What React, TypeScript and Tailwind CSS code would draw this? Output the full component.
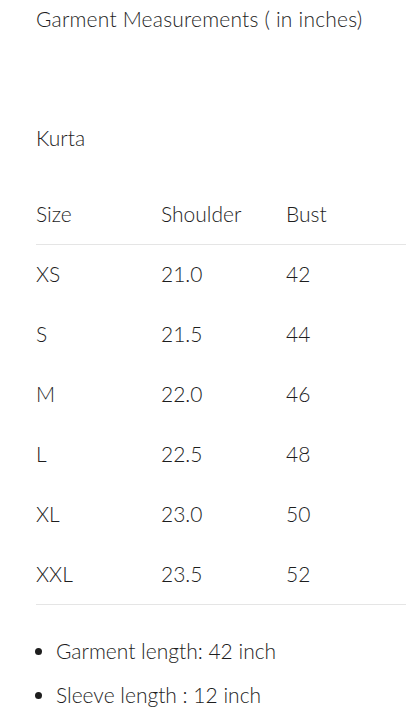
export default function App() {
  const rows = [
    ["XS", "21.0", "42"],
    ["S", "21.5", "44"],
    ["M", "22.0", "46"],
    ["L", "22.5", "48"],
    ["XL", "23.0", "50"],
    ["XXL", "23.5", "52"],
  ];
  return (
    <div
      className="w-[406px] h-[715px] overflow-hidden bg-white text-[#1e1e1e] text-[21px] leading-[28px] font-light"
      style={{ fontFamily: "Lato, 'Open Sans', sans-serif" }}
    >
      <div className="pl-[36px] pt-[5px]">
        <div className="tracking-[0.2px]">Garment Measurements ( in inches)</div>
        <div className="mt-[91px]">Kurta</div>
        <table className="mt-[32px] w-[400px] border-collapse">
          <thead>
            <tr className="h-[60px] border-b border-[#e5e5e5]">
              <th className="w-[125px] p-0 text-left font-light align-middle">Size</th>
              <th className="w-[125px] p-0 text-left font-light align-middle">Shoulder</th>
              <th className="p-0 text-left font-light align-middle">Bust</th>
            </tr>
          </thead>
          <tbody className="border-b border-[#e5e5e5]">
            {rows.map((r) => (
              <tr key={r[0]} className="h-[60px]">
                <td className="p-0 align-middle">{r[0]}</td>
                <td className="p-0 align-middle">{r[1]}</td>
                <td className="p-0 align-middle">{r[2]}</td>
              </tr>
            ))}
          </tbody>
        </table>
        <ul className="mt-[32px] list-disc pl-[20px] space-y-[16px]">
          <li>Garment length: 42 inch</li>
          <li>Sleeve length : 12 inch</li>
        </ul>
      </div>
    </div>
  );
}
